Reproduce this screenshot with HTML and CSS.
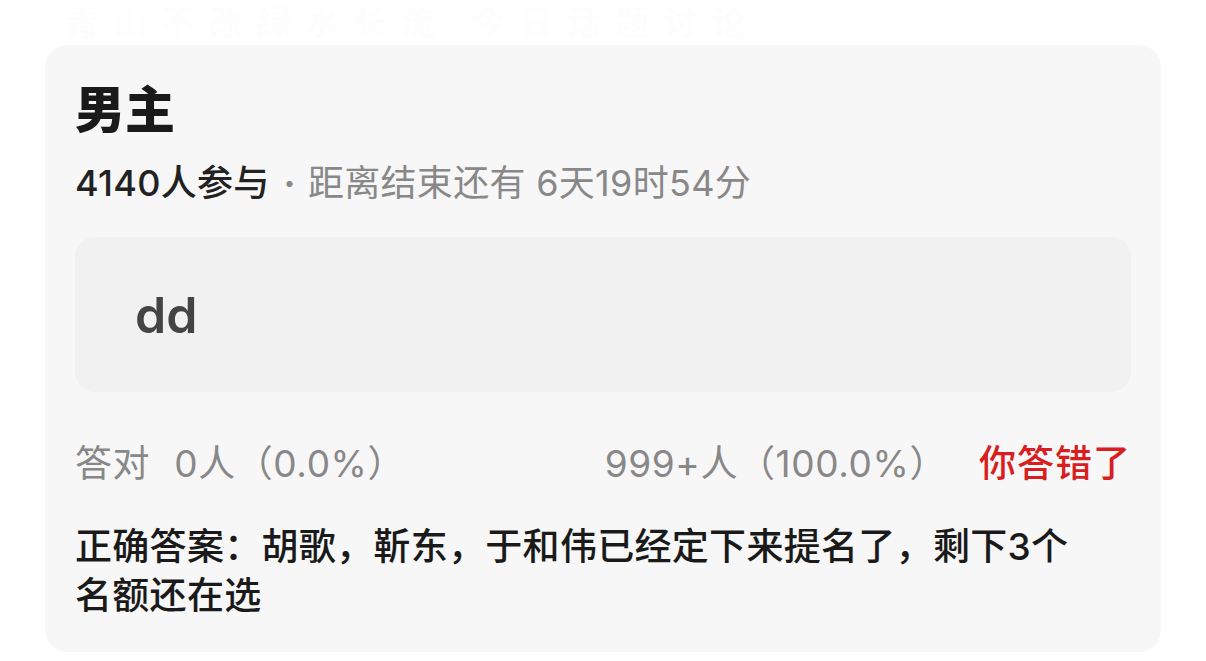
FILE: index.html
```html
<!DOCTYPE html>
<html lang="zh-CN">
<head>
<meta charset="utf-8">
<link rel="stylesheet" href="styles.css">
</head>
<body>
<div class="ghost">青山不改绿水长流 今日话题讨论</div>
<div class="card">
  <h1 class="title">男主</h1>
  <div class="meta"><span class="count">4140人参与</span><span class="dot">·</span><span>距离结束还有 6天19时54分</span></div>
  <div class="answer-box">dd</div>
  <div class="stats">
    <span class="label">答对</span>
    <span>0人（0.0%）</span>
    <span class="spacer"></span>
    <span>999+人（100.0%）</span>
    <span class="wrong">你答错了</span>
  </div>
  <div class="correct">正确答案：胡歌，靳东，于和伟已经定下来提名了，剩下3个名额还在选</div>
</div>
</body>
</html>
```

FILE: styles.css
```css
* { box-sizing: border-box; }
html, body { margin: 0; padding: 0; background: #ffffff; }
body {
  font-family: "Inter", "Noto Sans CJK SC", sans-serif;
  width: 1206px;
  height: 661px;
  overflow: hidden;
  padding: 0 45px;
}
.ghost {
  height: 45px;
  font-size: 34px;
  font-weight: 700;
  line-height: 45px;
  color: #fdfdfd;
  white-space: nowrap;
  letter-spacing: 14px;
  padding-left: 20px;
}
.card {
  background: #f7f7f7;
  border-radius: 22px;
  padding: 35px 30px 32px;
}
.title {
  margin: 0;
  font-size: 50px;
  line-height: 60px;
  font-weight: 800;
  color: #1a1a1a;
}
.meta {
  margin-top: 19px;
  font-size: 36px;
  line-height: 48px;
  color: #888888;
  display: flex;
  align-items: center;
  letter-spacing: 0.3px;
}
.meta .count { color: #222222; font-weight: 500; }
.meta .dot { margin: 0 12px 0 14px; font-weight: 700; }
.answer-box {
  margin-top: 30px;
  height: 155px;
  background: #f1f1f1;
  border-radius: 20px;
  display: flex;
  align-items: center;
  padding-left: 60px;
  font-size: 50px;
  font-weight: 600;
  color: #444444;
}
.stats {
  margin-top: 48px;
  display: flex;
  align-items: center;
  font-size: 37px;
  line-height: 48px;
  color: #888888;
  white-space: nowrap;
  letter-spacing: 0.6px;
}
.stats .label { margin-right: 24px; }
.stats .spacer { flex: 1; }
.stats .wrong { color: #d81e1e; font-weight: 500; margin-left: 32px; letter-spacing: 1px; }
.correct {
  margin-top: 34px;
  padding-right: 40px;
  font-size: 37px;
  line-height: 49px;
  font-weight: 500;
  color: #1a1a1a;
  letter-spacing: 0.3px;
}
```
